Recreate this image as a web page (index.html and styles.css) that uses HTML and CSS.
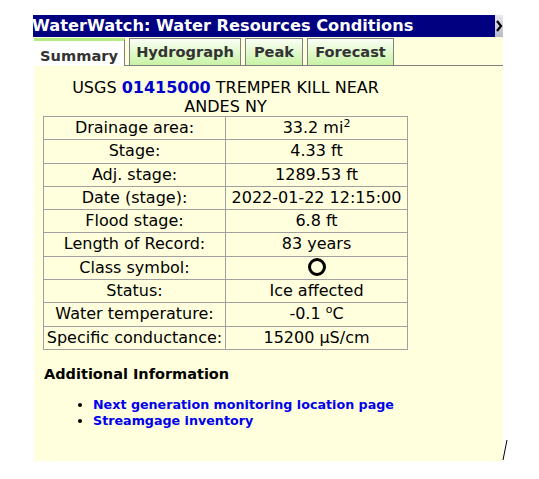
FILE: index.html
```html
<!DOCTYPE html>
<html lang="en">
<head>
  <meta charset="UTF-8">
  <title>WaterWatch: Water Resources Conditions</title>
  <link rel="stylesheet" href="styles.css">
</head>
<body>
  <div class="panel">
    <div class="titlebar">
      <span class="title">WaterWatch: Water Resources Conditions</span>
      <span class="close"><svg width="8" height="22" viewBox="0 0 8 22"><path d="M2 6 L6 11 L2 16" fill="none" stroke="#000" stroke-width="2.2"/></svg></span>
    </div>
    <ul class="tabs">
      <li class="tab active tab-summary">Summary</li>
      <li class="tab tab-hydro">Hydrograph</li>
      <li class="tab tab-peak">Peak</li>
      <li class="tab tab-forecast">Forecast</li>
    </ul>
    <div class="content">
      <h2 class="site">USGS <a href="#">01415000</a> TREMPER KILL NEAR<br>ANDES NY</h2>
      <table class="info">
        <tr><td>Drainage area:</td><td>33.2 mi<sup>2</sup></td></tr>
        <tr><td>Stage:</td><td>4.33 ft</td></tr>
        <tr><td>Adj. stage:</td><td>1289.53 ft</td></tr>
        <tr><td>Date (stage):</td><td>2022-01-22 12:15:00</td></tr>
        <tr><td>Flood stage:</td><td>6.8 ft</td></tr>
        <tr><td>Length of Record:</td><td>83 years</td></tr>
        <tr><td>Class symbol:</td><td><span class="ring"></span></td></tr>
        <tr><td>Status:</td><td>Ice affected</td></tr>
        <tr><td>Water temperature:</td><td>-0.1 <sup>o</sup>C</td></tr>
        <tr><td>Specific conductance:</td><td>15200 &micro;S/cm</td></tr>
      </table>
    </div>
    <h3 class="more">Additional Information</h3>
    <ul class="links">
      <li><a href="#">Next generation monitoring location page</a></li>
      <li><a href="#">Streamgage inventory</a></li>
    </ul>
    <svg class="grip" width="6" height="22" viewBox="0 0 6 22"><line x1="5" y1="1" x2="1" y2="21" stroke="#000" stroke-width="1"/></svg>
  </div>
</body>
</html>
```

FILE: styles.css
```css
body {
  margin: 0;
  background: #fff;
  font-family: "DejaVu Sans", Verdana, sans-serif;
}
.panel {
  position: relative;
  margin: 15px 0 0 34px;
  width: 469px;
  height: 446px;
  background: #ffffdd;
}
.titlebar {
  display: flex;
  height: 22px;
  margin-left: -1px;
  background: #000080;
  overflow: hidden;
}
.title {
  flex: 1;
  color: #fff;
  font-weight: bold;
  font-size: 16.2px;
  line-height: 22px;
  white-space: nowrap;
  margin-left: -1px;
}
.close {
  width: 8px;
  background: linear-gradient(#e8e8f0, #b8b8c8);
  overflow: hidden;
}
.close svg {
  display: block;
}
.tabs {
  display: flex;
  gap: 4px;
  list-style: none;
  margin: 1px 0 0;
  padding: 0;
  height: 27px;
  border-bottom: 1px solid #808080;
}
.tab {
  box-sizing: border-box;
  height: 27px;
  border: 1px solid #808080;
  border-bottom: none;
  background: linear-gradient(#fbfff5, #c8f2a4);
  color: #333;
  font-weight: bold;
  font-size: 14.6px;
  line-height: 26px;
  text-align: center;
}
.tab.active {
  height: 28px;
  border-left: none;
  border-top: 3px solid #b4ec84;
  background: #fff;
  line-height: 25px;
  padding-top: 2px;
}
.tab-summary { width: 91px; }
.tab-hydro { width: 112px; }
.tab-peak { width: 58px; }
.tab-forecast { width: 87px; }
.content {
  width: 365px;
  margin: 12px 0 0 9px;
}
.site {
  margin: 0;
  font-size: 16px;
  font-weight: normal;
  line-height: 19px;
  text-align: center;
  color: #000;
}
.site a {
  color: #0000cc;
  font-weight: bold;
  text-decoration: none;
}
.info {
  width: 365px;
  border-collapse: collapse;
  margin-top: 0;
  font-size: 16px;
}
.info td {
  border: 1px solid #a0a0a0;
  padding: 1px 1px;
  line-height: 20.3px;
  text-align: center;
  white-space: nowrap;
}
.info td:first-child {
  width: 179px;
}
.info sup {
  font-size: 11px;
  line-height: 0;
}
.ring {
  display: inline-block;
  box-sizing: border-box;
  width: 18px;
  height: 18px;
  border: 3px solid #000;
  border-radius: 50%;
  vertical-align: -3px;
}
.more {
  margin: 16px 0 0 10px;
  font-size: 14.5px;
  font-weight: bold;
  color: #000;
}
.links {
  margin: 15px 0 0;
  padding-left: 59px;
  font-size: 12.7px;
  line-height: 16px;
  font-weight: bold;
}
.links a {
  color: #0000ee;
  text-decoration: none;
}
.grip {
  position: absolute;
  right: -5px;
  bottom: 0;
}
```
